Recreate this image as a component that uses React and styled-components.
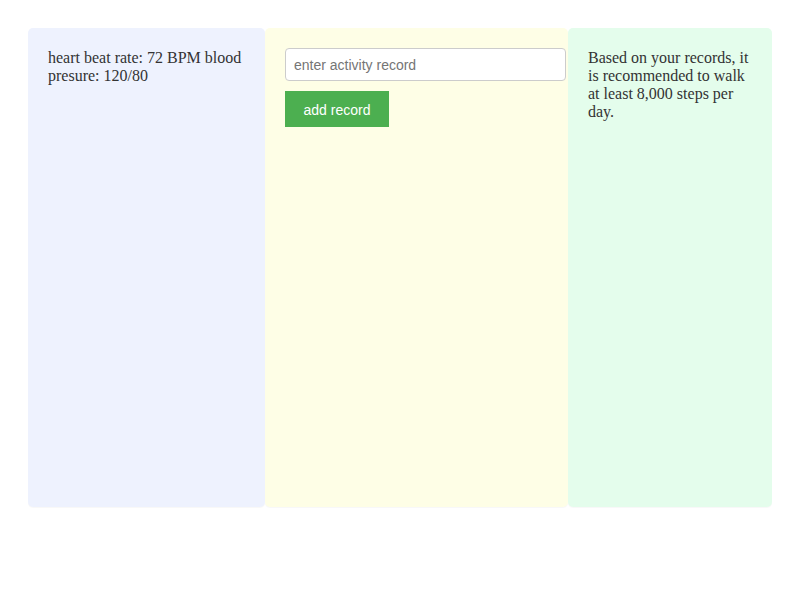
import React from "react";
import styled, { createGlobalStyle } from "styled-components";

const Global = createGlobalStyle`
  html, body { margin: 0; padding: 0; background: #fff; }
  body { font-family: "Liberation Serif", "Times New Roman", serif; color: #333; }
`;

const Page = styled.div`
  padding: 28px;
`;

const Columns = styled.div`
  display: grid;
  grid-template-columns: 237px 303px 204px;
  height: 479px;
`;

const Panel = styled.section`
  background: ${(p) => p.$bg};
  border-radius: 5px;
  padding: 20px;
  font-size: 16px;
  line-height: normal;
  box-shadow: 0 1px 1px rgba(0, 0, 0, 0.03);
`;

const Text = styled.p`
  margin: 1px 0 0;
`;

const Input = styled.input`
  display: block;
  box-sizing: border-box;
  width: 281px;
  height: 33px;
  padding: 0 8px;
  border: 1px solid #ccc;
  border-radius: 4px;
  background: #fff;
  font-family: "Liberation Sans", Arial, sans-serif;
  font-size: 14px;
  color: #333;
  outline: none;
  &::placeholder { color: #757575; }
`;

const Button = styled.button`
  display: block;
  margin-top: 10px;
  width: 104px;
  height: 36px;
  padding: 1px 0 0;
  border: none;
  border-radius: 0;
  background: #4caf50;
  color: #fff;
  font-family: "Liberation Sans", Arial, sans-serif;
  font-size: 14px;
  cursor: pointer;
`;

export default function App() {
  return (
    <>
      <Global />
      <Page>
        <Columns>
          <Panel $bg="#eef2fe">
            <Text>heart beat rate: 72 BPM blood presure: 120/80</Text>
          </Panel>
          <Panel $bg="#fefee6">
            <Input placeholder="enter activity record" />
            <Button>add record</Button>
          </Panel>
          <Panel $bg="#e4fdec">
            <Text>Based on your records, it is recommended to walk at least 8,000 steps per day.</Text>
          </Panel>
        </Columns>
      </Page>
    </>
  );
}
